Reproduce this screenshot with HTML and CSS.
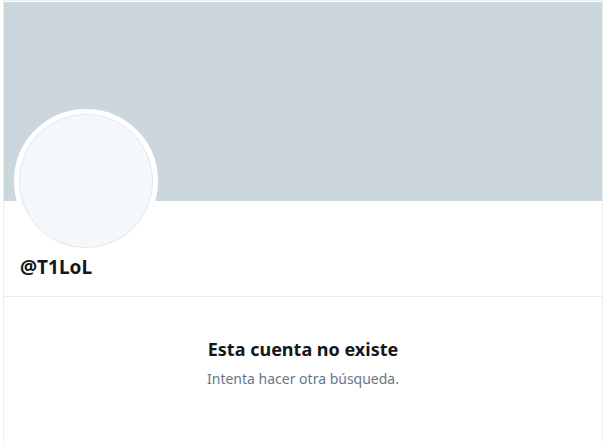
FILE: index.html
```html
<!DOCTYPE html>
<html>
<head>
    <link rel="stylesheet" href="styles.css">
</head>

<body>
    <div id="profile" class="flex-col">
        <div id="banner"></div>
        <div id="profile-head" class="flex-col">
            <div class="avatar"></div>
            <div class="handle">@T1LoL</div>
        </div>
        <div id="empty" class="flex-col">
            <div class="empty-title">Esta cuenta no existe</div>
            <div class="empty-text">Intenta hacer otra búsqueda.</div>
        </div>
    </div>
</body>

</html>
```

FILE: styles.css
```css
/* Helpers */
.flex-col {
    display: flex;
    flex-direction: column;
}

/* General Styling */
body, html {
    margin: 0;
    padding: 0;
    background: #fff;
    font-family: "Noto Sans", "Open Sans", sans-serif;
    color: #14171a;
}
#profile {
    margin-left: 3px;
    width: 600px;
    height: 442px;
    box-sizing: border-box;
    border: 1px solid #e6ecf0;
    border-bottom: none;
}
#banner {
    height: 199px;
    margin-top: 1px;
    background: #ccd6dd;
}
#profile-head {
    padding: 0 10px 17px 10px;
    border-bottom: 1px solid #e6ecf0;
}
.avatar {
    width: 134px;
    height: 134px;
    margin-top: -92px;
    border-radius: 50%;
    background: #f5f8fa;
    border: 5px solid #fff;
    box-shadow: inset 0 0 0 1px #e1e8ed;
}
.handle {
    margin: 2px 0 0 6px;
    font-size: 19px;
    font-weight: 700;
    line-height: 24px;
}
#empty {
    align-items: center;
    padding-top: 40px;
}
.empty-title {
    font-size: 18px;
    font-weight: 700;
    line-height: 24px;
}
.empty-text {
    margin-top: 8px;
    font-size: 14px;
    line-height: 19px;
    color: #657786;
}
```
